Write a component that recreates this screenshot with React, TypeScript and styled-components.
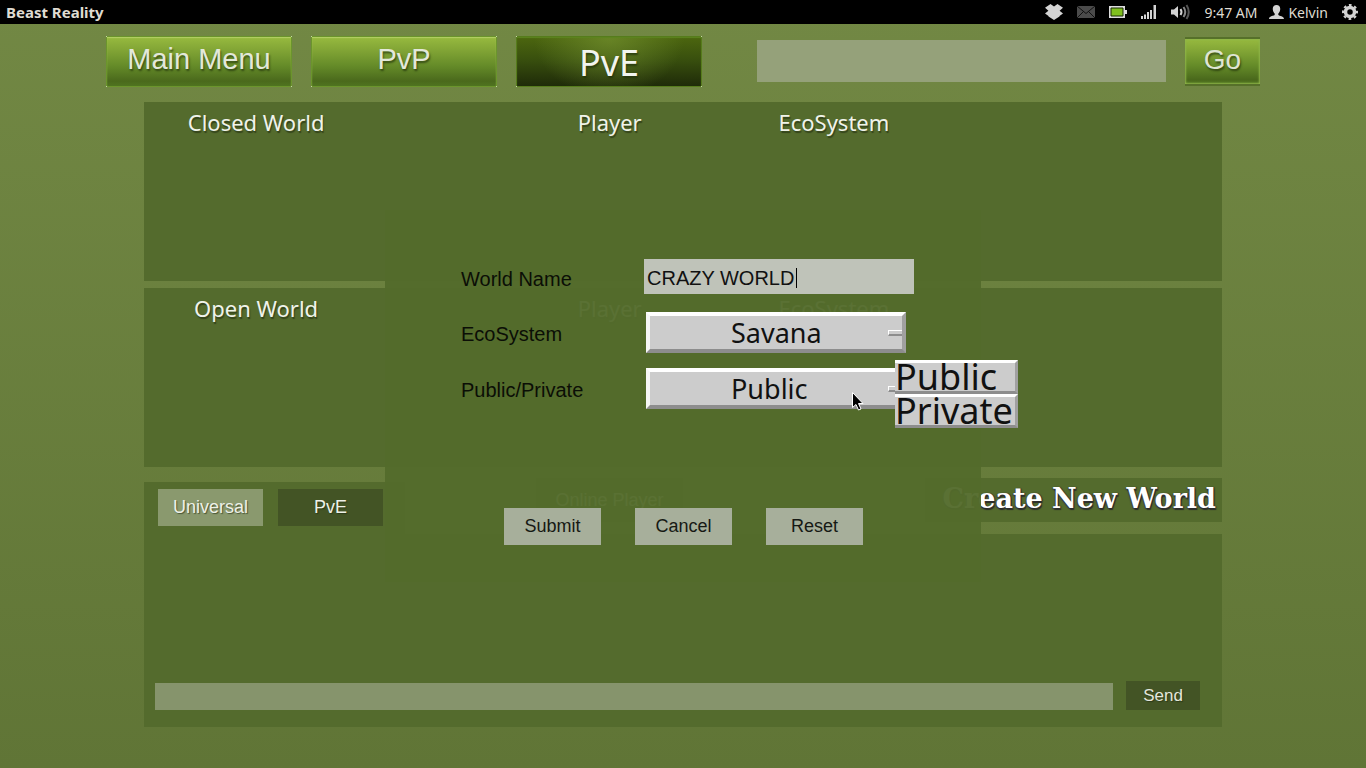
import React, { useState } from "react";
import styled, { createGlobalStyle } from "styled-components";

const sans = `"Liberation Sans", Arial, sans-serif`;
const humanist = `"Noto Sans", "Open Sans", sans-serif`;
const panel = "#546b2d";

const Global = createGlobalStyle`
  *, *::before, *::after { box-sizing: border-box; }
  html, body { margin: 0; }
  body { background: #607536; font-family: ${sans}; }
  button, input, select { font: inherit; border: 0; border-radius: 0; margin: 0; padding: 0; outline: 0; }
`;

const Page = styled.div`
  position: relative;
  display: flex;
  flex-direction: column;
  min-height: 100vh;
  background: linear-gradient(#728844, #607536);
`;

const StatusBar = styled.header`
  display: flex;
  align-items: center;
  justify-content: space-between;
  height: 24px;
  padding: 0 8px 0 6px;
  background: #000;
  color: #dfdbd2;
  font: 14px ${humanist};
`;

const AppName = styled.strong`
  font-size: 15px;
  line-height: 22px;
`;

const Indicators = styled.div`
  display: flex;
  align-items: center;
  gap: 14px;
`;

const Clock = styled.div`
  display: flex;
  align-items: center;
  gap: 12px;
`;

const User = styled.span`
  display: flex;
  align-items: center;
  gap: 4px;
`;

const TopNav = styled.nav`
  display: flex;
  align-items: center;
  gap: 19px;
  height: 78px;
  padding: 0 106px 4px;
`;

const glossy = "linear-gradient(#97ba3f 0%, #83a636 25%, #648a28 60%, #4a691c 90%, #4f7420 100%)";
const dark =
  "radial-gradient(ellipse 75px 60px at 50% 0, rgba(120,150,50,.65), transparent), linear-gradient(#4c660f, #39500e 45%, #1f2b09)";

const NavButton = styled.button<{ $active?: boolean }>`
  position: relative;
  flex: 0 0 186px;
  height: 51px;
  padding: ${(p) => (p.$active ? "4px 0 0" : "0 0 4px")};
  border: 1px solid ${(p) => (p.$active ? "#567c1c" : "#6b952c")};
  box-shadow: inset 0 1px 1px ${(p) => (p.$active ? "#5d8420" : "#b3d065")};
  background: ${(p) => (p.$active ? dark : glossy)};
  color: ${(p) => (p.$active ? "#f2f4ee" : "#e3e8da")};
  font: ${(p) => (p.$active ? `36px ${humanist}` : `29px ${sans}`)};
  line-height: 40px;
  text-shadow: 1px 2px 2px rgba(30, 45, 10, 0.7);

  /* light pixels left in the four corners of the glossy skin */
  &::after {
    content: "";
    position: absolute;
    inset: -1px;
    background:
      linear-gradient(#c5d6a5, #c5d6a5) 0 0,
      linear-gradient(#c5d6a5, #c5d6a5) 100% 0,
      linear-gradient(#c5d6a5, #c5d6a5) 0 100%,
      linear-gradient(#c5d6a5, #c5d6a5) 100% 100%;
    background-size: 1px 1px;
    background-repeat: no-repeat;
  }
`;

const SearchInput = styled.input`
  flex: 1;
  min-width: 0;
  height: 42px;
  margin-left: 36px;
  padding: 0 8px;
  background: #95a17a;
  font-size: 20px;
`;

const GoButton = styled.button`
  flex: 0 0 75px;
  height: 49px;
  padding-bottom: 2px;
  border: solid #56702a;
  border-width: 2px 0;
  background: ${glossy};
  box-shadow: inset 0 0 2px 1px #8fb548;
  color: #dfe5d3;
  font-size: 28px;
  text-shadow: 1px 2px 2px rgba(30, 45, 10, 0.7);
`;

const Content = styled.main`
  display: flex;
  flex-direction: column;
  padding: 0 144px 41px;
`;

const WorldPanel = styled.section`
  min-height: 179px;
  margin-bottom: 7px;
  background: ${panel};
`;

const WorldTable = styled.table`
  width: 100%;
  table-layout: fixed;
  border-collapse: collapse;
  color: #f0f3ea;
  font: 22px ${humanist};
  text-shadow: 1px 2px 1px rgba(30, 40, 15, 0.6);
  th {
    height: 40px;
    padding: 0;
    font-weight: 400;
    white-space: nowrap;
  }
`;

const Col = styled.col<{ $share: string }>`
  width: ${(p) => p.$share};
`;

const ActionRow = styled.div`
  display: grid;
  grid-template-columns: 261px minmax(16px, 131fr) 147px minmax(16px, 242fr) 297px;
  align-items: start;
  height: 56px;
  margin-top: 4px;
`;

const Tabs = styled.div`
  grid-column: 1;
  align-self: end;
  display: flex;
  gap: 15px;
  height: 52px;
  padding: 7px 14px;
  background: ${panel};
`;

const Tab = styled.button<{ $active?: boolean }>`
  width: 105px;
  height: 37px;
  background: ${(p) => (p.$active ? "#435425" : "#8a996e")};
  color: #eef1e8;
  font-size: 18px;
  text-shadow: 1px 1px 1px rgba(30, 40, 15, 0.6);
`;

const OnlineHeading = styled.h2`
  grid-column: 3;
  height: 44px;
  margin: 0;
  background: ${panel};
  color: #eef1e8;
  font-size: 18px;
  font-weight: 400;
  line-height: 44px;
  text-align: center;
  white-space: nowrap;
`;

const CreateButton = styled.button`
  grid-column: 5;
  height: 44px;
  padding: 0 6px 4px 0;
  background: ${panel};
  color: #fff;
  font: 700 27px "DejaVu Serif", serif;
  text-align: right;
  white-space: nowrap;
  text-shadow: 1px 2px 1px #2b2b2b, 1px 0 1px #2b2b2b, -1px 1px 1px #444;
`;

const ChatPanel = styled.form`
  display: flex;
  align-items: flex-end;
  gap: 13px;
  height: 193px;
  padding: 0 22px 17px 11px;
  background: ${panel};
`;

const ChatInput = styled.input`
  flex: 1;
  min-width: 0;
  height: 27px;
  padding: 0 6px;
  background: #86946c;
  font-size: 17px;
`;

const SendButton = styled.button`
  width: 74px;
  height: 29px;
  background: #435425;
  color: #e3e6dc;
  font-size: 17px;
  text-shadow: 1px 1px 1px rgba(30, 40, 15, 0.6);
`;

const Dialog = styled.form`
  position: absolute;
  top: 210px;
  left: 50%;
  width: 596px;
  height: 372px;
  margin-left: -298px;
  padding: 49px 67px 37px 76px;
  display: flex;
  flex-direction: column;
  justify-content: space-between;
  background: rgba(83, 107, 44, 0.96);
  color: #0b0e06;
  font-size: 20px;
`;

const Fields = styled.div`
  display: grid;
  gap: 15px;
`;

const Field = styled.div`
  position: relative;
  display: grid;
  grid-template-columns: 183px 270px;
  align-items: center;
  height: 41px;
  &:first-child { height: 38px; }
`;

const Label = styled.label`
  padding-top: 3px;
`;

const NameBox = styled.div`
  position: relative;
  height: 38px;
`;

const NameInput = styled.input`
  display: block;
  width: 100%;
  height: 35px;
  padding: 3px 3px 0;
  background: #bfc3b9;
  color: #111;
  caret-color: transparent;
`;

const Caret = styled.span`
  position: absolute;
  left: 152px;
  top: 9px;
  width: 1px;
  height: 20px;
  background: #000;
`;

const SelectBox = styled.div`
  position: relative;
  width: 260px;
  height: 41px;
  margin-left: 2px;
  &::after {
    content: "";
    position: absolute;
    right: 4px;
    top: 18px;
    width: 14px;
    height: 6px;
    border: solid;
    border-width: 1px 0 2px 1px;
    border-color: #fff #ccc #8d8d8d #fff;
    background: #ccc;
    pointer-events: none;
  }
`;

const Select = styled.select`
  display: block;
  width: 100%;
  height: 100%;
  padding: 0 0 0 81px;
  appearance: none;
  border: 4px solid;
  border-color: #fff #a0a0a0 #8d8d8d #f6f6f6;
  background: #ccc;
  color: #111;
  font: 27px ${humanist};
  line-height: 32px;
`;

const Menu = styled.div`
  position: absolute;
  z-index: 1;
  top: -8px;
  left: 434px;
  width: 123px;
`;

const MenuItem = styled.button`
  display: block;
  width: 100%;
  height: 34px;
  border: solid;
  border-width: 3px 3px 3px 0;
  border-color: #fff #a0a0a0 #8d8d8d #f6f6f6;
  background: #ccc;
  color: #111;
  font: 36px ${humanist};
  line-height: 28px;
  text-align: left;
  white-space: nowrap;
`;

const Pointer = styled.svg`
  position: absolute;
  z-index: 2;
  left: 391px;
  top: 24px;
  pointer-events: none;
`;

const DialogActions = styled.div`
  display: flex;
  gap: 34px;
  padding-left: 43px;
`;

const DialogButton = styled.button`
  width: 97px;
  height: 37px;
  background: #a7af9b;
  color: #161914;
  font-size: 18px;
`;

const StatusIcons = () => (
  <>
    <svg width="18" height="16" viewBox="0 0 18 16" fill="#d3d3d3">
      <path d="M5.5 0 9 2.6 12.5 0 18 3.8 14.6 6.7 18 9.6 14.5 12 14.5 12.6 9 16 3.5 12.6V12L0 9.6 3.4 6.7 0 3.8z" />
    </svg>
    <svg width="18" height="12" viewBox="0 0 18 12">
      <path d="M0 0h18v12H0z" fill="#4b4b4b" />
      <path d="M0 0l9 7.5L18 0M0 12l6.5-6.5M18 12l-6.5-6.5" fill="none" stroke="#111" />
    </svg>
    <svg width="18" height="12" viewBox="0 0 18 12">
      <path d="M1 1h14v10H1z" fill="none" stroke="#ddd" strokeWidth="2" />
      <path d="M16 4h2v4h-2z" fill="#ddd" />
      <path d="M2 2h12v8H2z" fill="#7fbf1e" stroke="#1b2a06" />
    </svg>
    <svg width="16" height="14" viewBox="0 0 16 14" fill="#d3d3d3">
      <path d="M0 11h2v3H0zM3 9.500h2V14H3zM6 7h2v7H6zM9 5h2v9H9zM12.500 0H15v14h-2.500z" />
    </svg>
    <svg width="19" height="16" viewBox="0 0 19 16" fill="none">
      <path d="M0 5.500h3L7 2v12L3 10.500H0z" fill="#d3d3d3" />
      <path d="M9.500 5q2 3 0 6" stroke="#d3d3d3" strokeWidth="2" />
      <path d="M12.500 3q3.500 5 0 10" stroke="#888" strokeWidth="2" />
      <path d="M15.500 1q4.500 7 0 14" stroke="#555" strokeWidth="2" />
    </svg>
  </>
);

const worlds = ["Closed World", "Open World"];

export default function App() {
  const [name, setName] = useState("CRAZY WORLD");
  const [eco, setEco] = useState("Savana");
  const [access, setAccess] = useState("Public");
  const stop = (e: React.FormEvent) => e.preventDefault();

  return (
    <Page>
      <Global />
      <StatusBar>
        <AppName>Beast Reality</AppName>
        <Indicators>
          <StatusIcons />
          <Clock>
            <time>9:47 AM</time>
            <User>
              <svg width="15" height="14" viewBox="0 0 15 14" fill="#d3d3d3">
                <path d="M7.500 0C10 0 11.500 1.800 11.200 4.500 11 6.500 10 8 9.300 8.500V10c1 1 5.700 1 5.700 4H0c0-3 4.700-3 5.700-4V8.500C5 8 4 6.500 3.800 4.500 3.500 1.800 5 0 7.500 0z" />
              </svg>
              Kelvin
            </User>
          </Clock>
          <svg width="16" height="16" viewBox="0 0 16 16" fill="none" stroke="#d3d3d3">
            <circle cx="8" cy="8" r="4.500" strokeWidth="3.500" />
            <circle cx="8" cy="8" r="7" strokeWidth="2" strokeDasharray="2.750 2.750" strokeDashoffset="1.370" />
          </svg>
        </Indicators>
      </StatusBar>

      <TopNav>
        <NavButton>Main Menu</NavButton>
        <NavButton>PvP</NavButton>
        <NavButton $active>PvE</NavButton>
        <SearchInput aria-label="Search" />
        <GoButton>Go</GoButton>
      </TopNav>

      <Content>
        {worlds.map((title) => (
          <WorldPanel key={title}>
            <WorldTable>
              <colgroup>
                <Col $share="20.8%" />
                <Col $share="12%" />
                <Col $share="20.8%" />
                <Col $share="20.8%" />
                <Col $share="25.6%" />
              </colgroup>
              <thead>
                <tr>
                  <th>{title}</th>
                  <th />
                  <th>Player</th>
                  <th>EcoSystem</th>
                  <th />
                </tr>
              </thead>
            </WorldTable>
          </WorldPanel>
        ))}

        <ActionRow>
          <Tabs>
            <Tab>Universal</Tab>
            <Tab $active>PvE</Tab>
          </Tabs>
          <OnlineHeading>Online Player</OnlineHeading>
          <CreateButton>Create New World</CreateButton>
        </ActionRow>

        <ChatPanel onSubmit={stop}>
          <ChatInput aria-label="Message" />
          <SendButton>Send</SendButton>
        </ChatPanel>
      </Content>

      <Dialog onSubmit={stop}>
        <Fields>
          <Field>
            <Label htmlFor="world-name">World Name</Label>
            <NameBox>
              <NameInput id="world-name" value={name} onChange={(e) => setName(e.target.value)} />
              <Caret />
            </NameBox>
          </Field>
          <Field>
            <Label htmlFor="ecosystem">EcoSystem</Label>
            <SelectBox>
              <Select id="ecosystem" value={eco} onChange={(e) => setEco(e.target.value)}>
                <option>Savana</option>
              </Select>
            </SelectBox>
          </Field>
          <Field>
            <Label htmlFor="access">Public/Private</Label>
            <SelectBox>
              <Select id="access" value={access} onChange={(e) => setAccess(e.target.value)}>
                <option>Public</option>
                <option>Private</option>
              </Select>
            </SelectBox>
            <Menu>
              <MenuItem type="button" onClick={() => setAccess("Public")}>Public</MenuItem>
              <MenuItem type="button" onClick={() => setAccess("Private")}>Private</MenuItem>
            </Menu>
            <Pointer width="12" height="19" viewBox="0 0 12 19">
              <path d="M.5.500v15l3.500-3 2.500 5.500 2.500-1-2.500-5.500h4.500z" fill="#000" stroke="#fff" />
            </Pointer>
          </Field>
        </Fields>
        <DialogActions>
          <DialogButton>Submit</DialogButton>
          <DialogButton type="button">Cancel</DialogButton>
          <DialogButton type="reset">Reset</DialogButton>
        </DialogActions>
      </Dialog>
    </Page>
  );
}
